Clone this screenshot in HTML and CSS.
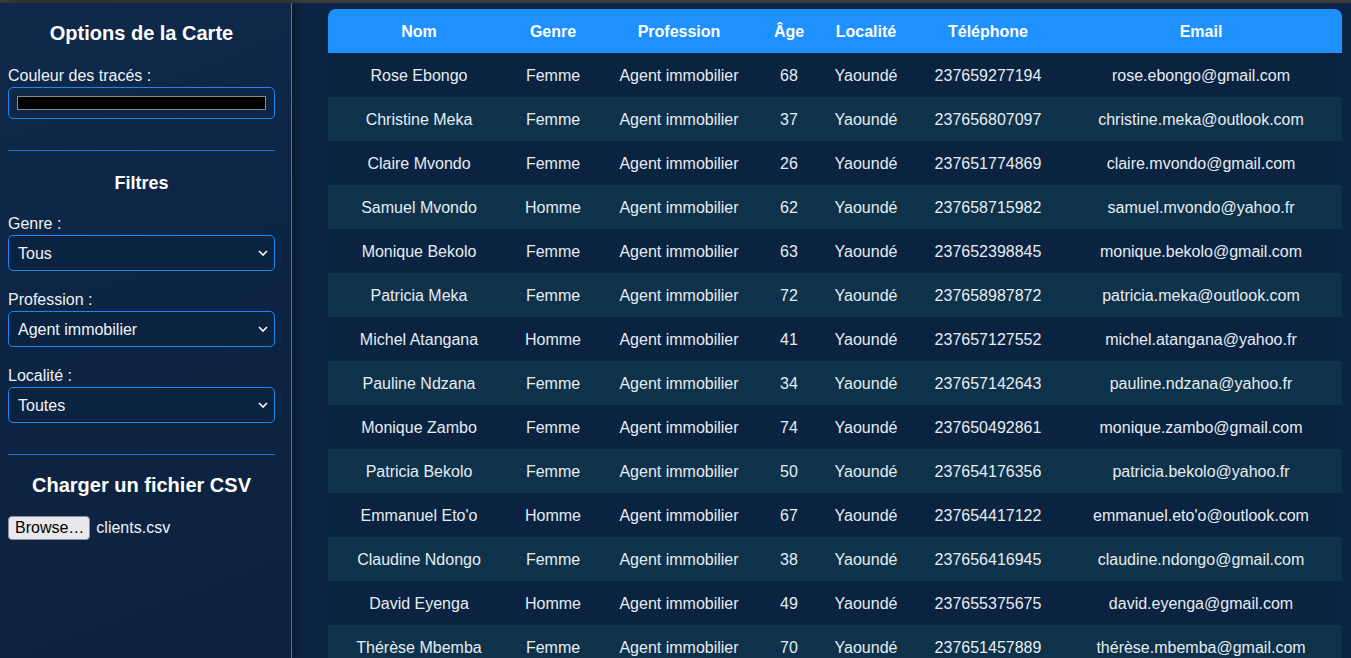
FILE: index.html
```html
<!DOCTYPE html>
<html lang="fr">
<head>
<meta charset="utf-8">
<title>Clients</title>
<link rel="stylesheet" href="styles.css">
</head>
<body>
<div class="topstrip"></div>
<div class="layout">
  <aside class="sidebar">
    <h2 class="title">Options de la Carte</h2>
    <label class="lbl">Couleur des tracés :</label>
    <div class="colorbox"><div class="swatch"></div></div>
    <hr class="sep">
    <h3 class="subtitle">Filtres</h3>
    <label class="lbl">Genre :</label>
    <div class="select"><span>Tous</span><svg class="chev" viewBox="0 0 10 6" width="10" height="6"><path d="M1 1 L5 5 L9 1" fill="none" stroke="#fff" stroke-width="1.6"/></svg></div>
    <label class="lbl">Profession :</label>
    <div class="select"><span>Agent immobilier</span><svg class="chev" viewBox="0 0 10 6" width="10" height="6"><path d="M1 1 L5 5 L9 1" fill="none" stroke="#fff" stroke-width="1.6"/></svg></div>
    <label class="lbl">Localité :</label>
    <div class="select"><span>Toutes</span><svg class="chev" viewBox="0 0 10 6" width="10" height="6"><path d="M1 1 L5 5 L9 1" fill="none" stroke="#fff" stroke-width="1.6"/></svg></div>
    <hr class="sep sep2">
    <h2 class="title csv">Charger un fichier CSV</h2>
    <div class="file"><span class="browse">Browse…</span><span class="fname">clients.csv</span></div>
  </aside>
  <main class="main">
    <table class="tbl">
      <colgroup>
        <col style="width:182px"><col style="width:86px"><col style="width:166px"><col style="width:54px"><col style="width:100px"><col style="width:144px"><col style="width:282px">
      </colgroup>
      <thead>
        <tr><th>Nom</th><th>Genre</th><th>Profession</th><th>Âge</th><th>Localité</th><th>Téléphone</th><th>Email</th></tr>
      </thead>
      <tbody>
        <tr><td>Rose Ebongo</td><td>Femme</td><td>Agent immobilier</td><td>68</td><td>Yaoundé</td><td>237659277194</td><td>rose.ebongo@gmail.com</td></tr>
        <tr><td>Christine Meka</td><td>Femme</td><td>Agent immobilier</td><td>37</td><td>Yaoundé</td><td>237656807097</td><td>christine.meka@outlook.com</td></tr>
        <tr><td>Claire Mvondo</td><td>Femme</td><td>Agent immobilier</td><td>26</td><td>Yaoundé</td><td>237651774869</td><td>claire.mvondo@gmail.com</td></tr>
        <tr><td>Samuel Mvondo</td><td>Homme</td><td>Agent immobilier</td><td>62</td><td>Yaoundé</td><td>237658715982</td><td>samuel.mvondo@yahoo.fr</td></tr>
        <tr><td>Monique Bekolo</td><td>Femme</td><td>Agent immobilier</td><td>63</td><td>Yaoundé</td><td>237652398845</td><td>monique.bekolo@gmail.com</td></tr>
        <tr><td>Patricia Meka</td><td>Femme</td><td>Agent immobilier</td><td>72</td><td>Yaoundé</td><td>237658987872</td><td>patricia.meka@outlook.com</td></tr>
        <tr><td>Michel Atangana</td><td>Homme</td><td>Agent immobilier</td><td>41</td><td>Yaoundé</td><td>237657127552</td><td>michel.atangana@yahoo.fr</td></tr>
        <tr><td>Pauline Ndzana</td><td>Femme</td><td>Agent immobilier</td><td>34</td><td>Yaoundé</td><td>237657142643</td><td>pauline.ndzana@yahoo.fr</td></tr>
        <tr><td>Monique Zambo</td><td>Femme</td><td>Agent immobilier</td><td>74</td><td>Yaoundé</td><td>237650492861</td><td>monique.zambo@gmail.com</td></tr>
        <tr><td>Patricia Bekolo</td><td>Femme</td><td>Agent immobilier</td><td>50</td><td>Yaoundé</td><td>237654176356</td><td>patricia.bekolo@yahoo.fr</td></tr>
        <tr><td>Emmanuel Eto'o</td><td>Homme</td><td>Agent immobilier</td><td>67</td><td>Yaoundé</td><td>237654417122</td><td>emmanuel.eto'o@outlook.com</td></tr>
        <tr><td>Claudine Ndongo</td><td>Femme</td><td>Agent immobilier</td><td>38</td><td>Yaoundé</td><td>237656416945</td><td>claudine.ndongo@gmail.com</td></tr>
        <tr><td>David Eyenga</td><td>Homme</td><td>Agent immobilier</td><td>49</td><td>Yaoundé</td><td>237655375675</td><td>david.eyenga@gmail.com</td></tr>
        <tr><td>Thérèse Mbemba</td><td>Femme</td><td>Agent immobilier</td><td>70</td><td>Yaoundé</td><td>237651457889</td><td>thérèse.mbemba@gmail.com</td></tr>
      </tbody>
    </table>
  </main>
</div>
</body>
</html>
```
FILE: styles.css
```css
* { box-sizing: border-box; }
html, body { margin: 0; padding: 0; height: 100%; overflow: hidden; }
body {
  font-family: "Liberation Sans", Arial, sans-serif;
  font-size: 16px;
  color: #ffffff;
  background: #0d2544;
}
.topstrip { height: 3px; background: #3b3b3b; }
.layout {
  display: flex;
  height: calc(100vh - 3px);
}
.sidebar {
  width: 292px;
  flex: 0 0 292px;
  padding: 0 16px 0 8px;
  background: linear-gradient(160deg, #10294a 0%, #0c2442 60%, #0b2341 100%);
  border-right: 1px solid #2f7fd6;
  box-shadow: 4px 0 12px rgba(0,0,0,0.35);
  position: relative;
  z-index: 1;
}
.title {
  font-size: 20px;
  font-weight: bold;
  text-align: center;
  margin: 19px 0 0 0;
  line-height: 23px;
}
.lbl {
  display: block;
  margin-top: 22px;
  line-height: 18px;
  color: #eef2f7;
}
.colorbox {
  margin-top: 2px;
  height: 32px;
  border: 1px solid #1e86f0;
  border-radius: 5px;
  padding: 8px 8px 0 8px;
}
.swatch {
  height: 14px;
  background: #000;
  border: 1px solid #8a8a8a;
}
.sep {
  border: 0;
  border-top: 1px solid #1f6fd0;
  margin: 31px 0 0 0;
}
.subtitle {
  font-size: 18px;
  font-weight: bold;
  text-align: center;
  margin: 22px 0 0 0;
  line-height: 21px;
}
.subtitle + .lbl { margin-top: 21px; }
.select {
  margin-top: 2px;
  height: 36px;
  border: 1px solid #1e86f0;
  border-radius: 5px;
  background: #0a2341;
  display: flex;
  align-items: center;
  justify-content: space-between;
  padding: 2px 6px 0 9px;
  color: #f2f4f8;
}
.select + .lbl { margin-top: 20px; }
.chev { display: block; margin-top: -2px; }
.sep2 { margin-top: 31px; }
.title.csv { margin-top: 19px; }
.file {
  margin-top: 19px;
  display: flex;
  align-items: center;
  gap: 6px;
}
.browse {
  display: inline-block;
  background: #e9e9ed;
  color: #000;
  border: 1px solid #8f8f9d;
  border-radius: 4px;
  height: 24px;
  line-height: 22px;
  padding: 0 5px 0 6px;
  font-size: 16px;
  font-family: "Liberation Sans", Arial, sans-serif;
}
.fname { color: #f2f4f8; }
.main {
  flex: 1;
  overflow: hidden;
  padding: 6px 9px 0 36px;
  background: #0d2544;
}
.tbl {
  width: 1014px;
  table-layout: fixed;
  border-collapse: separate;
  border-spacing: 0;
}
.tbl th {
  background: #1e90ff;
  color: #fff;
  font-weight: bold;
  height: 44px;
  padding: 2px 0 0 0;
  text-align: center;
}
.tbl thead th:first-child { border-top-left-radius: 8px; }
.tbl thead th:last-child { border-top-right-radius: 8px; }
.tbl td {
  height: 44px;
  padding: 2px 0 0 0;
  text-align: center;
  color: #e6ecf3;
  white-space: nowrap;
}
.tbl tbody tr:nth-child(odd) td { background: #0a2340; }
.tbl tbody tr:nth-child(even) td { background: #0e3249; }
```
